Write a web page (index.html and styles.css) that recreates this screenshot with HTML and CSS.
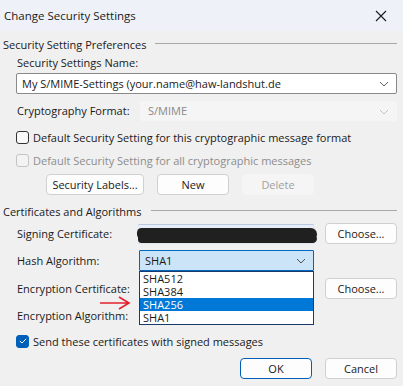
FILE: index.html
```html
<!DOCTYPE html>
<html lang="en">
<head>
    <meta charset="UTF-8">
    <title>Change Security Settings</title>
    <link rel="stylesheet" href="styles.css">
</head>
<body>
<div class="dialog">
    <div class="titlebar">
        <span class="title">Change Security Settings</span>
        <svg class="close" width="12" height="12" viewBox="0 0 12 12"><path d="M1 1 L11 11 M11 1 L1 11" stroke="#1a1a1a" stroke-width="1.1"/></svg>
    </div>

    <div class="legend"><span>Security Setting Preferences</span><i></i></div>
    <div class="row indent label-only">Security Settings Name:</div>
    <div class="row indent">
        <div class="combo wide">
            <span>My S/MIME-Settings (your.name@haw-landshut.de</span>
            <svg class="chev" width="10" height="6" viewBox="0 0 10 6"><path d="M1 1 L5 5 L9 1" fill="none" stroke="#606060"/></svg>
        </div>
    </div>
    <div class="row indent gap6">
        <label class="lbl">Cryptography Format:</label>
        <div class="combo disabled flex1">
            <span>S/MIME</span>
            <svg class="chev" width="10" height="6" viewBox="0 0 10 6"><path d="M1 1 L5 5 L9 1" fill="none" stroke="#c0c0c0"/></svg>
        </div>
    </div>
    <div class="row indent check-row gap9">
        <span class="box"></span>Default Security Setting for this cryptographic message format
    </div>
    <div class="row indent check-row gap9 muted">
        <span class="box off"></span>Default Security Setting for all cryptographic messages
    </div>
    <div class="row buttons gap7">
        <button class="btn labels">Security Labels...</button>
        <button class="btn">New</button>
        <button class="btn off">Delete</button>
    </div>

    <div class="legend gap8"><span>Certificates and Algorithms</span><i></i></div>
    <div class="row indent gap4">
        <label class="lbl">Signing Certificate:</label>
        <div class="field"><span class="scribble"></span><span class="scribble low"></span></div>
        <button class="btn choose">Choose...</button>
    </div>
    <div class="row indent gap6">
        <label class="lbl">Hash Algorithm:</label>
        <div class="combo focus">
            <span>SHA1</span>
            <svg class="chev" width="10" height="6" viewBox="0 0 10 6"><path d="M1 1 L5 5 L9 1" fill="none" stroke="#505050"/></svg>
            <ul class="list">
                <li>SHA512</li>
                <li>SHA384</li>
                <li class="sel">SHA256</li>
                <li>SHA1</li>
            </ul>
        </div>
    </div>
    <div class="row indent gap7">
        <label class="lbl">Encryption Certificate:</label>
        <div class="field blank"></div>
        <button class="btn choose">Choose...</button>
    </div>
    <div class="row indent gap6">
        <label class="lbl">Encryption Algorithm:</label>
    </div>
    <div class="row indent check-row gap8">
        <span class="box on">
            <svg width="8" height="6" viewBox="0 0 8 6"><path d="M0.8 3 L3 5 L7.2 0.8" fill="none" stroke="#fff" stroke-width="1"/></svg>
        </span>Send these certificates with signed messages
    </div>
    <div class="row footer gap10">
        <button class="btn ok">OK</button>
        <button class="btn">Cancel</button>
    </div>

    <!-- red annotation arrow -->
    <svg class="arrow" width="34" height="16" viewBox="0 0 34 16"><path d="M1 8 L30 8 M20 2 L30 8 L20 14" fill="none" stroke="#e3202c" stroke-width="1.6"/></svg>
</div>
</body>
</html>
```

FILE: styles.css
```css
* {
    box-sizing: border-box;
}
body {
    margin: 0;
    background: #f0f0f0;
    font-family: 'Open Sans', 'Noto Sans', sans-serif;
    font-size: 11px;
    color: #1a1a1a;
}
.dialog {
    position: relative;
    width: 403px;
    height: 386px;
    display: flex;
    flex-direction: column;
    padding-right: 6px;
    white-space: nowrap;
}
.titlebar {
    height: 31px;
    margin-right: -6px;
    background: #eef2f8;
    display: flex;
    align-items: center;
    justify-content: space-between;
    padding: 0 16px 0 4px;
}
.title {
    font-size: 11.5px;
}
.legend {
    height: 16px;
    margin-top: 5px;
    padding-left: 3px;
    display: flex;
    align-items: center;
}
.legend i {
    flex: 1;
    height: 1px;
    background: #a8a8a8;
    margin-left: 9px;
    margin-top: -1px;
}
.row {
    height: 21px;
    display: flex;
    align-items: center;
}
.indent {
    padding-left: 17px;
}
.label-only {
    height: 14px;
    margin-top: 3px;
}
.label-only + .row {
    margin-top: 4px;
}
.gap4 { margin-top: 4px; }
.gap6 { margin-top: 6px; }
.gap7 { margin-top: 7px; }
.gap8 { margin-top: 8px; }
.gap9 { margin-top: 9px; }
.gap10 { margin-top: 10px; }
.lbl {
    width: 121px;
    flex-shrink: 0;
}
.combo {
    position: relative;
    height: 21px;
    width: 175px;
    border: 1px solid #8a8a8a;
    border-radius: 2px;
    background: #fff;
    display: flex;
    align-items: center;
    padding-left: 5px;
}
.combo.wide {
    flex: 1;
    margin-left: -1px;
}
.combo.flex1 {
    flex: 1;
    height: 20px;
    margin-left: 2px;
}
.combo .chev {
    position: absolute;
    right: 7px;
    top: 7px;
}
.combo.disabled {
    background: #f5f5f5;
    border-color: #f5f5f5;
    color: #8a8a8a;
    padding-left: 7px;
}
.combo.focus {
    margin-left: 1px;
    background: #cce4f7;
    border-color: #0067c0;
    border-radius: 1px;
}
.list {
    position: absolute;
    left: -1px;
    top: 20px;
    width: 175px;
    margin: 0;
    padding: 0;
    list-style: none;
    background: #fff;
    border: 1px solid #1b3a6b;
    z-index: 2;
}
.list li {
    height: 13px;
    line-height: 13px;
    padding-left: 3px;
}
.list li.sel {
    background: #0078d7;
    color: #fff;
}
.check-row {
    height: 14px;
}
.check-row .box {
    width: 13px;
    height: 13px;
    border: 1px solid #333;
    border-radius: 3px;
    background: #fafafa;
    margin-left: -1px;
    margin-right: 4px;
    display: flex;
    align-items: center;
    justify-content: center;
}
.check-row .box.off {
    border-color: #c4c4c4;
    background: #f3f3f3;
}
.check-row .box.on {
    background: #005fb8;
    border-color: #005fb8;
}
.muted {
    color: #8d8d8d;
}
.btn {
    height: 21px;
    width: 72px;
    border: 1px solid #d0d0d0;
    border-radius: 4px;
    background: #fdfdfd;
    font-family: inherit;
    font-size: 11px;
    color: #1a1a1a;
    padding: 0;
}
.buttons {
    padding-left: 46px;
    gap: 13px;
}
.buttons .btn.labels {
    width: 98px;
}
.btn.off {
    background: #f5f5f5;
    border-color: #f5f5f5;
    color: #a0a0a0;
}
.field {
    position: relative;
    width: 176px;
    height: 20px;
    border: 1px solid #dde6f0;
    border-top-color: #b8cbe2;
    background: #e8eef5;
}
.field.blank {
    border: none;
    background: none;
}
.scribble {
    position: absolute;
    left: -2px;
    top: 3px;
    width: 180px;
    height: 10px;
    background: #202020;
    border-radius: 6px 8px 5px 5px;
}
.scribble.low {
    left: -1px;
    top: 9px;
    width: 179px;
    height: 9px;
    border-radius: 5px 7px 6px 5px;
}
.btn.choose {
    margin-left: auto;
}
.footer {
    justify-content: flex-end;
    gap: 13px;
}
.btn.ok {
    border: 1px solid #005fb8;
}
.arrow {
    position: absolute;
    left: 99px;
    top: 295px;
}
```
